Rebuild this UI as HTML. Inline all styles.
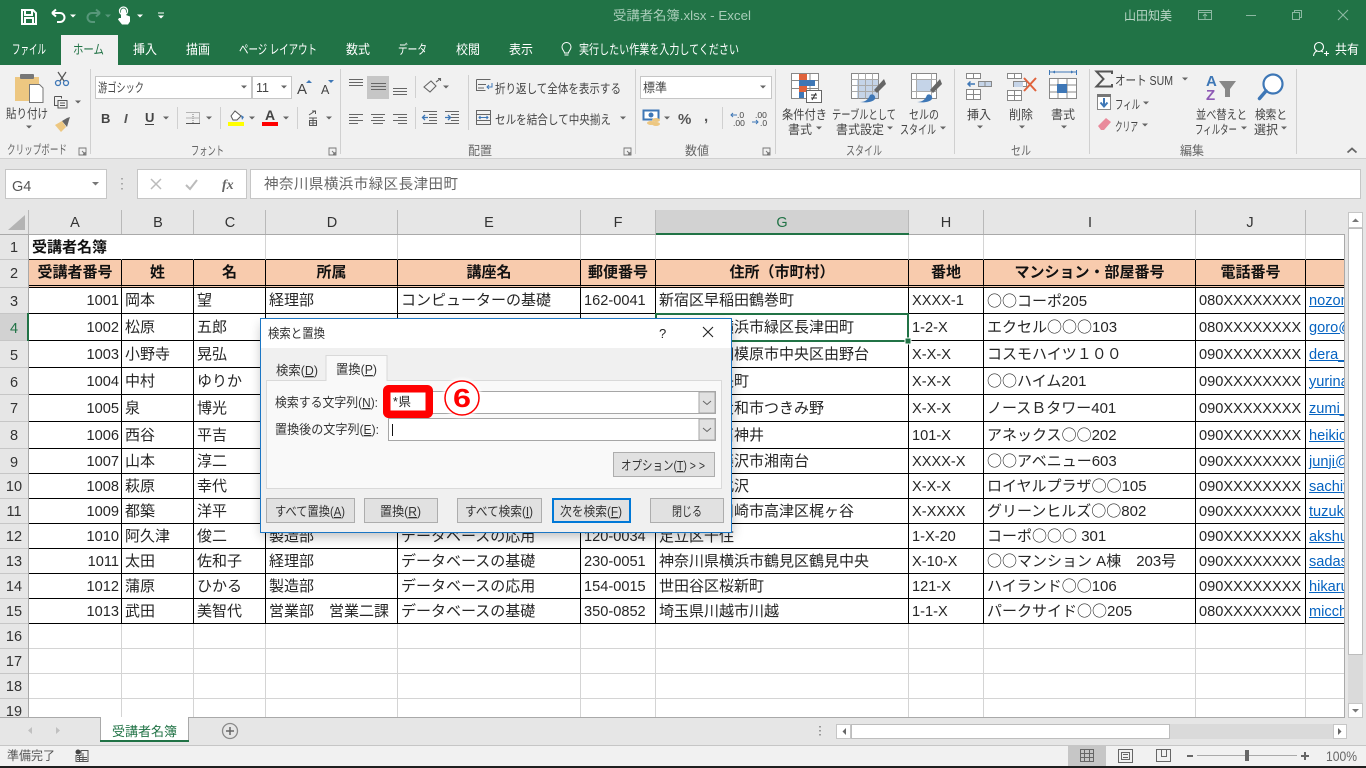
<!DOCTYPE html>
<html lang="ja"><head><meta charset="utf-8"><title>受講者名簿.xlsx - Excel</title>
<style>
html,body{margin:0;padding:0;width:1366px;height:768px;overflow:hidden;background:#fff}
table{position:absolute;left:29px;top:235px;border-collapse:separate;border-spacing:0;table-layout:fixed;width:1316px;font:14.6px "Liberation Sans","Noto Sans CJK JP",sans-serif;color:#262626}
td{box-sizing:border-box;border-right:1px solid #000;border-bottom:1px solid #000;padding:1px 0 0 3px;white-space:nowrap;overflow:hidden;line-height:16px;vertical-align:middle}
td:nth-child(2),td:nth-child(3),td:nth-child(4),td:nth-child(5),td:nth-child(7),td:nth-child(9){font-size:15px}
td.n{text-align:right;padding:1px 2px 0 0}
tr.h td{background:#f8cbad;font-weight:bold;text-align:center;border-bottom:3px double #000;padding:0;font-size:15px;color:#111}
tr.e td,tr.g td{border-color:#d4d4d4}
tr.g td{border-bottom-color:#000}
tr.l td:last-child a{color:#0563c1;text-decoration:underline}
td:last-child{border-right:0}
.c{font-family:"Noto Sans CJK JP",sans-serif}
svg{position:absolute;left:0;top:0}
svg text{font-family:"Liberation Sans","Noto Sans CJK JP",sans-serif;font-size:12.5px;fill:#444}
.w text{fill:#fff;font-size:13px}
.d text{font-size:13px;fill:#333}
.u{text-decoration:underline}
</style></head><body>
<table>
<colgroup><col style="width:93px"><col style="width:72px"><col style="width:72px"><col style="width:132px"><col style="width:183px"><col style="width:75px"><col style="width:253px"><col style="width:75px"><col style="width:212px"><col style="width:110px"><col style="width:39px"></colgroup>
<tr class="g" style="height:25px"><td style="font-weight:bold;font-size:15px;color:#111;padding-left:3px;overflow:visible;border-right-color:transparent">受講者名簿</td><td style="border-right-color:transparent"></td><td></td><td></td><td></td><td></td><td></td><td></td><td></td><td></td><td></td></tr>
<tr class="h" style="height:28px"><td>受講者番号</td><td>姓</td><td>名</td><td>所属</td><td>講座名</td><td>郵便番号</td><td>住所（市町村）</td><td>番地</td><td>マンション・部屋番号</td><td>電話番号</td><td></td></tr>
<tr class="l" style="height:26px"><td class="n">1001</td><td>岡本</td><td>望</td><td>経理部</td><td>コンピューターの基礎</td><td>162-0041</td><td>新宿区早稲田鶴巻町</td><td>XXXX-1</td><td><span class="c">○○</span>コーポ205</td><td>080XXXXXXXX</td><td><a>nozomi@</a></td></tr>
<tr class="l" style="height:27px"><td class="n">1002</td><td>松原</td><td>五郎</td><td>製造部</td><td>データベースの基礎</td><td>226-0027</td><td>神奈川県横浜市緑区長津田町</td><td>1-2-X</td><td>エクセル<span class="c">○○○</span>103</td><td>080XXXXXXXX</td><td><a>goro@x</a></td></tr>
<tr class="l" style="height:27px"><td class="n">1003</td><td>小野寺</td><td>晃弘</td><td>営業部</td><td>データベースの応用</td><td>252-0239</td><td>神奈川県相模原市中央区由野台</td><td>X-X-X</td><td>コスモハイツ１００</td><td>090XXXXXXXX</td><td><a>dera_xx</a></td></tr>
<tr class="l" style="height:27px"><td class="n">1004</td><td>中村</td><td>ゆりか</td><td>経理部</td><td>データベースの基礎</td><td>100-0000</td><td>東京都中央町</td><td>X-X-X</td><td><span class="c">○○</span>ハイム201</td><td>090XXXXXXXX</td><td><a>yurina@</a></td></tr>
<tr class="l" style="height:27px"><td class="n">1005</td><td>泉</td><td>博光</td><td>製造部</td><td>データベースの応用</td><td>242-0000</td><td>神奈川県大和市つきみ野</td><td>X-X-X</td><td>ノースＢタワー401</td><td>090XXXXXXXX</td><td><a>zumi_xx</a></td></tr>
<tr class="l" style="height:27px"><td class="n">1006</td><td>西谷</td><td>平吉</td><td>営業部</td><td>データベースの基礎</td><td>177-0000</td><td>東京都下石神井</td><td>101-X</td><td>アネックス<span class="c">○○</span>202</td><td>090XXXXXXXX</td><td><a>heikichi</a></td></tr>
<tr class="l" style="height:25px"><td class="n">1007</td><td>山本</td><td>淳二</td><td>経理部</td><td>データベースの応用</td><td>251-0000</td><td>神奈川県藤沢市湘南台</td><td>XXXX-X</td><td><span class="c">○○</span>アベニュー603</td><td>090XXXXXXXX</td><td><a>junji@x</a></td></tr>
<tr class="l" style="height:25px"><td class="n">1008</td><td>萩原</td><td>幸代</td><td>製造部</td><td>データベースの基礎</td><td>155-0000</td><td>東京都下北沢</td><td>X-X-X</td><td>ロイヤルプラザ<span class="c">○○</span>105</td><td>090XXXXXXXX</td><td><a>sachiyo</a></td></tr>
<tr class="l" style="height:25px"><td class="n">1009</td><td>都築</td><td>洋平</td><td>営業部</td><td>データベースの応用</td><td>213-0000</td><td>神奈川県川崎市高津区梶ヶ谷</td><td>X-XXXX</td><td>グリーンヒルズ<span class="c">○○</span>802</td><td>090XXXXXXXX</td><td><a>tuzuki@</a></td></tr>
<tr class="l" style="height:25px"><td class="n">1010</td><td>阿久津</td><td>俊二</td><td>製造部</td><td>データベースの応用</td><td>120-0034</td><td>足立区千住</td><td>1-X-20</td><td>コーポ<span class="c">○○○</span> 301</td><td>090XXXXXXXX</td><td><a>akshun</a></td></tr>
<tr class="l" style="height:25px"><td class="n">1011</td><td>太田</td><td>佐和子</td><td>経理部</td><td>データベースの基礎</td><td>230-0051</td><td>神奈川県横浜市鶴見区鶴見中央</td><td>X-10-X</td><td><span class="c">○○</span>マンション A棟　203号</td><td>090XXXXXXXX</td><td><a>sadasa</a></td></tr>
<tr class="l" style="height:25px"><td class="n">1012</td><td>蒲原</td><td>ひかる</td><td>製造部</td><td>データベースの応用</td><td>154-0015</td><td>世田谷区桜新町</td><td>121-X</td><td>ハイランド<span class="c">○○</span>106</td><td>090XXXXXXXX</td><td><a>hikaru</a></td></tr>
<tr class="l" style="height:25px"><td class="n">1013</td><td>武田</td><td>美智代</td><td>営業部　営業二課</td><td>データベースの基礎</td><td>350-0852</td><td>埼玉県川越市川越</td><td>1-1-X</td><td>パークサイド<span class="c">○○</span>205</td><td>080XXXXXXXX</td><td><a>micchi</a></td></tr>
<tr class="e" style="height:25px"><td></td><td></td><td></td><td></td><td></td><td></td><td></td><td></td><td></td><td></td><td></td></tr>
<tr class="e" style="height:25px"><td></td><td></td><td></td><td></td><td></td><td></td><td></td><td></td><td></td><td></td><td></td></tr>
<tr class="e" style="height:25px"><td></td><td></td><td></td><td></td><td></td><td></td><td></td><td></td><td></td><td></td><td></td></tr>
<tr class="e" style="height:19px"><td></td><td></td><td></td><td></td><td></td><td></td><td></td><td></td><td></td><td></td><td></td></tr>
</table>

<svg width="1366" height="768" viewBox="0 0 1366 768" shape-rendering="geometricPrecision">
<defs>
<path id="a" d="M-3-1.5h6l-3 3z" fill="#666"/>
<path id="la" d="M0 0h7v7h-7zM3 3l3 3M4 6h2V4" fill="none" stroke="#777" stroke-width=".9"/>
<filter id="sh" x="-10%" y="-10%" width="120%" height="125%"><feGaussianBlur stdDeviation="6"/></filter>
<filter id="gl" x="-30%" y="-30%" width="160%" height="160%"><feGaussianBlur stdDeviation="1.200"/></filter>
</defs>

<!-- title bar & tabs -->
<rect width="1366" height="65" fill="#217346"/>
<rect x="61" y="35" width="57" height="30" fill="#f1f1f1"/>
<path d="M22 10h11l3 3v11H22zM25 10v5h7v-5M25 24v-6h8v6" fill="none" stroke="#fff" stroke-width="2"/>
<path d="M52 13l4-3.500M52 13l4 3.500M52 13h8a4.500 4.500 0 0 1 0 9h-3" fill="none" stroke="#fff" stroke-width="2"/>
<path d="M70 14.500h6l-3 3z" fill="#fff"/>
<path d="M100 13l-4-3.500M100 13l-4 3.500M100 13h-8a4.500 4.500 0 0 0 0 9h3" fill="none" stroke="#57977a" stroke-width="2"/>
<path d="M105 14.500h6l-3 3z" fill="#57977a"/>
<path d="M121 18v-7a2.500 2.500 0 0 1 5 0v4l4 1.500v5l-2 3h-6l-4-5 1-1.500z" fill="#fff"/><circle cx="123.500" cy="11" r="4" fill="none" stroke="#fff" stroke-width="1.300"/>
<path d="M137 14.500h6l-3 3z" fill="#fff"/>
<path d="M158 12.500h6v1h-6zM158 15.500h6l-3 3z" fill="#fff"/>
<text x="613" y="20" textLength="138" lengthAdjust="spacingAndGlyphs" style="fill:#a9cdb9;font-size:13px">受講者名簿.xlsx  -  Excel</text>
<text x="1124" y="20" textLength="48" lengthAdjust="spacingAndGlyphs" style="fill:#b9d6c6;font-size:12.500px">山田知美</text>
<path d="M1198.500 10.500h13v9h-13zM1198.500 12.500h13M1205 19v-5M1203 16l2-2 2 2" fill="none" stroke="#8cb8a2"/>
<path d="M1246 15.500h10" stroke="#8cb8a2" fill="none"/>
<path d="M1292.500 12.500h7v7h-7zM1294.500 12.500v-2h7v7h-2" fill="none" stroke="#8cb8a2"/>
<path d="M1338 10l10 10M1348 10l-10 10" stroke="#8cb8a2" fill="none" stroke-width="1.100"/>

<g class="w">
<text x="12" y="54" textLength="34" lengthAdjust="spacingAndGlyphs">ファイル</text>
<text x="73" y="54" textLength="31" lengthAdjust="spacingAndGlyphs" style="fill:#217346">ホーム</text>
<text x="133" y="54" textLength="24" lengthAdjust="spacingAndGlyphs">挿入</text>
<text x="186" y="54" textLength="24" lengthAdjust="spacingAndGlyphs">描画</text>
<text x="239" y="54" textLength="78" lengthAdjust="spacingAndGlyphs">ページ レイアウト</text>
<text x="346" y="54" textLength="24" lengthAdjust="spacingAndGlyphs">数式</text>
<text x="398" y="54" textLength="29" lengthAdjust="spacingAndGlyphs">データ</text>
<text x="456" y="54" textLength="24" lengthAdjust="spacingAndGlyphs">校閲</text>
<text x="509" y="54" textLength="24" lengthAdjust="spacingAndGlyphs">表示</text>
<text x="579" y="54" textLength="160" lengthAdjust="spacingAndGlyphs">実行したい作業を入力してください</text>
<text x="1335" y="54" textLength="24" lengthAdjust="spacingAndGlyphs">共有</text>
</g>
<path d="M564.500 53c0-2-2.500-3-2.500-6a4.500 4.500 0 0 1 9 0c0 3-2.500 4-2.500 6zM564.500 55h4" fill="none" stroke="#fff"/>
<circle cx="1319" cy="47" r="4.500" fill="none" stroke="#fff" stroke-width="1.100"/>
<path d="M1313.500 56c.5-3 2-4.500 3.500-5M1321 51l2 1M1324 53.500h5M1326.500 51v5" fill="none" stroke="#fff" stroke-width="1.100"/>

<!-- ribbon -->
<rect y="65" width="1366" height="93" fill="#f1f1f1"/>
<rect y="158" width="1366" height="52" fill="#e6e6e6"/>
<rect y="158" width="1366" height="1" fill="#d0d0d0"/>
<g stroke="#d0d0d0">
<path d="M90.500 69v85M340.500 69v85M635.500 69v85M775.500 69v85M954.500 69v85M1089.500 69v85M1296.500 69v85"/>
<path d="M177.500 107v22M220.500 107v22M297.500 107v22M415.500 76v22M415.500 107v22M468.500 75v55M722.500 107v22"/>
</g>

<!-- clipboard -->
<path d="M15 77h9v-2h5v2h10v24H15z" fill="#edc781"/><rect x="20" y="74" width="14" height="5" rx="1" fill="#777"/>
<path d="M29.500 84.500h10l3.500 3.500v14.500h-13.500z" fill="#fff" stroke="#777"/>
<g fill="none" stroke="#555" stroke-width="1.200"><path d="M58 72l6 9M66 72l-6 9"/></g>
<circle cx="58" cy="83" r="2.500" fill="none" stroke="#3e77b6" stroke-width="1.300"/><circle cx="66" cy="83" r="2.500" fill="none" stroke="#3e77b6" stroke-width="1.300"/>
<path d="M54.500 96.500h7v2M58 100.500h9v7.500h-9zM54.500 96.500v9h3.500M60 103h5M60 105.500h5" fill="none" stroke="#555"/>
<use href="#a" x="78" y="102"/>
<path d="M55 125l7-4 4 6-5 5z" fill="#edc781"/><path d="M62 121l5-3 3-1-1 3-2 7z" fill="#666"/>
<text x="6" y="118" textLength="42" lengthAdjust="spacingAndGlyphs">貼り付け</text><use href="#a" x="29" y="127"/>
<text x="7" y="154" textLength="60" lengthAdjust="spacingAndGlyphs" style="fill:#666">クリップボード</text>
<use href="#la" x="79" y="148"/>

<!-- font -->
<rect x="95.500" y="76.500" width="156" height="22" fill="#fff" stroke="#c6c6c6"/>
<rect x="252.500" y="76.500" width="39" height="22" fill="#fff" stroke="#c6c6c6"/>
<text x="98" y="92" textLength="46" lengthAdjust="spacingAndGlyphs">游ゴシック</text><use href="#a" x="244" y="87"/>
<text x="256" y="92" style="font-size:12.500px">11</text><use href="#a" x="284" y="87"/>
<text x="297" y="94" style="font-size:15px">A</text><path d="M306 83l3-3 3 3z" fill="#3e77b6"/>
<text x="321" y="94" style="font-size:12.500px">A</text><path d="M328 80h6l-3 3z" fill="#3e77b6"/>
<text x="101" y="123" style="font-size:13px;font-weight:bold">B</text>
<text x="124" y="123" style="font-size:13px;font-style:italic;font-weight:bold;fill:#555">I</text>
<text x="145" y="122" style="font-size:13px;font-weight:bold">U</text><path d="M145 124.500h9" stroke="#444"/>
<use href="#a" x="166" y="118"/>
<path d="M186.500 112.500h13v11h-13M193 112v11M186.500 118h13" fill="none" stroke="#777" stroke-dasharray="1 1"/><path d="M186 123.500h14" stroke="#555"/>
<use href="#a" x="209" y="118"/>
<path d="M231 116l4-5 6 5-4 4h-4z" fill="#fff" stroke="#555"/><path d="M241 115l3 2-2 3z" fill="#3e77b6"/>
<rect x="228" y="122" width="16" height="4" fill="#ff0"/><use href="#a" x="252" y="118"/>
<text x="265" y="120" style="font-size:14px;font-weight:bold">A</text><rect x="262" y="122" width="16" height="4" fill="#f00"/><use href="#a" x="286" y="118"/>
<path d="M309 115l6-4M312 111h3.500v3M309 118h8M313 118v8M309.500 120.500h7v5h-7zM309.500 123h7" fill="none" stroke="#555"/>
<use href="#a" x="329" y="118"/>
<text x="191" y="155" textLength="33" lengthAdjust="spacingAndGlyphs" style="fill:#666">フォント</text>
<use href="#la" x="329" y="148"/>

<!-- alignment -->
<rect x="367" y="76" width="22" height="23" fill="#c6c6c6"/>
<g stroke="#666" fill="none">
<path d="M349 79.500h14M349 82.500h14M349 85.500h14"/>
<path d="M371 83.500h15M371 86.500h15M371 89.500h15"/>
<path d="M393 88.500h14M393 91.500h14M393 94.500h14"/>
<path d="M349 114.500h14M349 117.500h9M349 120.500h14M349 123.500h9"/>
<path d="M371 114.500h14M373 117.500h10M371 120.500h14M373 123.500h10"/>
<path d="M393 114.500h14M398 117.500h9M393 120.500h14M398 123.500h9"/>
<path d="M429 114.500h8M429 117.500h8M429 120.500h8M423 123.500h14M423 111.500h14"/>
<path d="M451 114.500h8M451 117.500h8M451 120.500h8M445 123.500h14M445 111.500h14"/>
</g>
<path d="M423 117.500h5M425 115l-2.500 2.500 2.500 2.500" stroke="#3e77b6" fill="none" stroke-width="1.300"/>
<path d="M445 117.500h5M448 115l2.500 2.500-2.500 2.500" stroke="#3e77b6" fill="none" stroke-width="1.300"/>
<path d="M424 87l7-6 5 5-6 6zM436 82l4-3M438 78.500h2.500v2.500" fill="none" stroke="#666" stroke-width="1.100"/>
<use href="#a" x="446" y="87"/>
<path d="M476.500 79.500h14M476.500 79.500v11h9M478 84.500h8M478 88h6" fill="none" stroke="#666"/><path d="M492 83v4h-5M489 85l-2 2 2 2" fill="none" stroke="#3e77b6"/>
<text x="495" y="93" textLength="126" lengthAdjust="spacingAndGlyphs">折り返して全体を表示する</text>
<path d="M476.500 110.500h14v14h-14zM476.500 114.500h14M476.500 120.500h14" fill="none" stroke="#666"/><path d="M479 117.500h9M480.500 116l-1.500 1.500 1.500 1.500M486.500 116l1.500 1.500-1.500 1.500" fill="none" stroke="#3e77b6"/>
<text x="495" y="124" textLength="116" lengthAdjust="spacingAndGlyphs">セルを結合して中央揃え</text><use href="#a" x="623" y="118"/>
<text x="468" y="155" textLength="24" lengthAdjust="spacingAndGlyphs" style="fill:#666">配置</text>
<use href="#la" x="624" y="148"/>

<!-- number -->
<rect x="640.500" y="76.500" width="131" height="22" fill="#fff" stroke="#c6c6c6"/>
<text x="643" y="92" textLength="24" lengthAdjust="spacingAndGlyphs">標準</text><use href="#a" x="763" y="87"/>
<rect x="643.500" y="110.500" width="15" height="9" fill="#fff" stroke="#3e77b6" stroke-width="2"/><circle cx="651" cy="115" r="2.500" fill="#3e77b6"/>
<ellipse cx="651" cy="123" rx="4" ry="2" fill="#edc781"/><ellipse cx="656" cy="120" rx="4" ry="2" fill="#edc781"/><ellipse cx="656" cy="124" rx="4" ry="2" fill="#edc781"/>
<use href="#a" x="667" y="118"/>
<text x="678" y="124" style="font-size:15px;font-weight:bold;fill:#555">%</text>
<text x="704" y="121" style="font-size:15px;font-weight:bold;fill:#555">,</text>
<text x="737" y="118" style="font-size:8.500px">.0</text><text x="733" y="126" style="font-size:8.500px">.00</text><path d="M731 115h6M733 113l-2 2 2 2" stroke="#3e77b6" fill="none"/>
<text x="755" y="118" style="font-size:8.500px">.00</text><text x="760" y="126" style="font-size:8.500px">.0</text><path d="M752 122h6M756 120l2 2-2 2" stroke="#3e77b6" fill="none"/>
<text x="685" y="155" textLength="24" lengthAdjust="spacingAndGlyphs" style="fill:#666">数値</text>
<use href="#la" x="763" y="148"/>

<!-- styles -->
<path d="M791.500 73.500h27v25h-27zM791.500 80.500h27M791.500 88.500h27M801 73.500v25M810 73.500v25" fill="#fff" stroke="#888"/>
<rect x="799" y="74" width="8" height="6" fill="#e0633c"/><rect x="799" y="80" width="16" height="6" fill="#3e77b6"/><rect x="799" y="86" width="8" height="6" fill="#e0633c"/><rect x="799" y="92" width="5" height="6" fill="#3e77b6"/>
<rect x="806.500" y="90.500" width="15" height="12" fill="#fff" stroke="#666"/>
<path d="M811 95h6M811 98h6M816 93l-4 7" stroke="#333" fill="none"/>
<text x="782" y="119" textLength="45" lengthAdjust="spacingAndGlyphs">条件付き</text>
<text x="788" y="134" textLength="24" lengthAdjust="spacingAndGlyphs">書式</text><use href="#a" x="819" y="128"/>
<path d="M851.500 73.500h27v25h-27z" fill="#fff" stroke="#888"/><rect x="857" y="79" width="21" height="19" fill="#c5d4e8"/>
<path d="M851.500 79.500h27M851.500 85.500h27M851.500 91.500h27M858.500 73.500v25M865.500 73.500v25M872.500 73.500v25" fill="none" stroke="#aaa"/>
<path d="M884 79l-10 11 3 3 9-9z" fill="#666"/><path d="M860 102c5 0 8-2 10-7 3-2 6 1 5 4-2 3-8 4-15 3z" fill="#3e77b6"/>
<text x="832" y="119" textLength="64" lengthAdjust="spacingAndGlyphs">テーブルとして</text>
<text x="836" y="134" textLength="48" lengthAdjust="spacingAndGlyphs">書式設定</text><use href="#a" x="890" y="128"/>
<path d="M911.500 73.500h25v25h-25z" fill="#fff" stroke="#888"/><rect x="916" y="79" width="15" height="12" fill="#c5d4e8"/>
<path d="M911.500 79.500h25M911.500 91.500h25M916.500 73.500v25M931.500 73.500v25" fill="none" stroke="#aaa"/>
<path d="M940 79l-10 11 3 3 9-9z" fill="#666"/><path d="M917 102c5 0 8-2 10-7 3-2 6 1 5 4-2 3-8 4-15 3z" fill="#3e77b6"/>
<text x="909" y="119" textLength="30" lengthAdjust="spacingAndGlyphs">セルの</text>
<text x="900" y="134" textLength="36" lengthAdjust="spacingAndGlyphs">スタイル</text><use href="#a" x="943" y="128"/>
<text x="846" y="155" textLength="36" lengthAdjust="spacingAndGlyphs" style="fill:#666">スタイル</text>

<!-- cells -->
<path d="M966.500 73.500h14v5h-14zM973.500 73.500v5M966.500 89.500h14v10h-14zM966.500 94.500h14M973.500 89.500v10" fill="#fff" stroke="#888"/>
<path d="M978.500 81.500h13v5h-13zM985 81.500v5" fill="#c5d4e8" stroke="#888"/><path d="M968 84h7M970.500 81.500l-2.500 2.500 2.500 2.500" stroke="#3e77b6" stroke-width="1.500" fill="none"/>
<text x="967" y="119" textLength="24" lengthAdjust="spacingAndGlyphs">挿入</text><use href="#a" x="980" y="127"/>
<path d="M1007.500 73.500h14v5h-14zM1014.500 73.500v5M1007.500 90.500h14v10h-14zM1007.500 95.500h14M1014.500 90.500v10M1013.500 81.500h13v5h-13z" fill="#fff" stroke="#888"/>
<rect x="1014" y="82" width="9" height="5" fill="#c5d4e8"/>
<path d="M1024 78l12 13M1036 78l-12 13" stroke="#e0633c" stroke-width="2" fill="none"/>
<text x="1009" y="119" textLength="24" lengthAdjust="spacingAndGlyphs">削除</text><use href="#a" x="1022" y="127"/>
<path d="M1049.500 72h27M1049.500 70v5M1076.500 70v5" stroke="#3e77b6" fill="none"/><path d="M1052 72l3-1.500v3zM1074 72l-3-1.500v3z" fill="#3e77b6"/>
<path d="M1049.500 78.500h27v20h-27zM1049.500 85h27M1049.500 92h27M1058 78.500v20M1067 78.500v20" fill="#fff" stroke="#888"/>
<rect x="1057" y="84" width="10" height="9" fill="#3e77b6"/>
<text x="1051" y="119" textLength="24" lengthAdjust="spacingAndGlyphs">書式</text><use href="#a" x="1064" y="127"/>
<text x="1011" y="155" textLength="20" lengthAdjust="spacingAndGlyphs" style="fill:#666">セル</text>

<!-- editing -->
<path d="M1112 74v-2.500h-15.500l7 7.500-7 7.500h15.500V84" fill="none" stroke="#555" stroke-width="2"/>
<text x="1115" y="85" textLength="58" lengthAdjust="spacingAndGlyphs" style="font-size:13px">オート SUM</text><use href="#a" x="1185" y="79"/>
<path d="M1097.500 94.500h13v15h-13z" fill="#fff" stroke="#888"/><rect x="1097" y="94" width="14" height="3" fill="#777"/><path d="M1104 98v8M1100.500 102.500l3.500 4 3.500-4" stroke="#3e77b6" stroke-width="2" fill="none"/>
<text x="1115" y="109" textLength="25" lengthAdjust="spacingAndGlyphs">フィル</text><use href="#a" x="1146" y="103"/>
<path d="M1098 126l8-8 5 4-7 8h-3z" fill="#e98a9b"/>
<text x="1115" y="131" textLength="23" lengthAdjust="spacingAndGlyphs">クリア</text><use href="#a" x="1145" y="125"/>
<text x="1206" y="86" style="font-size:15px;font-weight:bold;fill:#3e77b6">A</text><text x="1206" y="100" style="font-size:15px;font-weight:bold;fill:#8e5ab5">Z</text>
<path d="M1219 81h17l-6 8v8h-5v-8z" fill="#888"/>
<text x="1196" y="119" textLength="51" lengthAdjust="spacingAndGlyphs">並べ替えと</text>
<text x="1195" y="134" textLength="42" lengthAdjust="spacingAndGlyphs">フィルター</text><use href="#a" x="1244" y="128"/>
<circle cx="1273" cy="84" r="9.500" fill="#fff" stroke="#3e77b6" stroke-width="2.200"/><path d="M1266 91l-6.500 7.500" stroke="#3e77b6" stroke-width="3.500" stroke-linecap="round"/>
<text x="1255" y="119" textLength="32" lengthAdjust="spacingAndGlyphs">検索と</text>
<text x="1254" y="134" textLength="24" lengthAdjust="spacingAndGlyphs">選択</text><use href="#a" x="1284" y="128"/>
<text x="1180" y="155" textLength="24" lengthAdjust="spacingAndGlyphs" style="fill:#666">編集</text>
<path d="M1347.500 152.500l4.500-4 4.500 4" fill="none" stroke="#666" stroke-width="1.800"/>

<!-- formula bar -->
<rect x="5.500" y="169.500" width="101" height="29" fill="#fff" stroke="#c6c6c6"/>
<text x="12" y="191" style="font-size:14.500px;fill:#555">G4</text>
<path d="M92 182h7l-3.500 3.500z" fill="#777"/>
<path d="M122 178v1.500M122 183v1.500M122 188v1.500" stroke="#aaa" stroke-width="2" fill="none"/>
<rect x="137.500" y="169.500" width="109" height="29" fill="#fff" stroke="#c6c6c6"/>
<path d="M151 179l10 10M161 179l-10 10" stroke="#bbb" stroke-width="1.500" fill="none"/>
<path d="M186 185l4 4 7-9" stroke="#bbb" stroke-width="2" fill="none"/>
<text x="222" y="189" style="font-family:'Liberation Serif',serif;font-size:14px;font-style:italic;font-weight:bold;fill:#666">fx</text>
<rect x="250.500" y="169.500" width="1110" height="29" fill="#fff" stroke="#c6c6c6"/>
<text x="264" y="189" textLength="194" style="font-size:14.500px;fill:#666">神奈川県横浜市緑区長津田町</text>

<!-- col headers -->
<rect x="0" y="210" width="1345" height="24" fill="#e6e6e6"/>
<rect x="656" y="210" width="252" height="24" fill="#d2d2d2"/>
<path d="M25 215v15H8z" fill="#b4b4b4"/>
<g stroke="#b9b9b9"><path d="M28.500 210v24M121.500 210v24M193.500 210v24M265.500 210v24M397.500 210v24M580.500 210v24M655.500 210v24M908.500 210v24M983.500 210v24M1195.500 210v24M1305.500 210v24"/></g>
<rect y="234" width="1345" height="1" fill="#a9a9a9"/>
<rect x="656" y="233" width="253" height="2" fill="#217346"/>
<g text-anchor="middle">
<text x="75" y="227" style="font-size:14.500px;fill:#333">A</text><text x="158" y="227" style="font-size:14.500px;fill:#333">B</text><text x="230" y="227" style="font-size:14.500px;fill:#333">C</text><text x="332" y="227" style="font-size:14.500px;fill:#333">D</text><text x="489" y="227" style="font-size:14.500px;fill:#333">E</text><text x="618" y="227" style="font-size:14.500px;fill:#333">F</text><text x="782" y="227" style="font-size:14.500px;fill:#217346">G</text><text x="946" y="227" style="font-size:14.500px;fill:#333">H</text><text x="1090" y="227" style="font-size:14.500px;fill:#333">I</text><text x="1250" y="227" style="font-size:14.500px;fill:#333">J</text>
</g>
<!-- row headers -->
<rect y="235" width="28" height="483" fill="#e6e6e6"/>
<rect y="313" width="28" height="28" fill="#d2d2d2"/>
<g stroke="#c6c6c6"><path d="M0 259.500h28M0 287.500h28M0 313.500h28M0 340.500h28M0 367.500h28M0 394.500h28M0 421.500h28M0 448.500h28M0 473.500h28M0 498.500h28M0 523.500h28M0 548.500h28M0 573.500h28M0 598.500h28M0 623.500h28M0 648.500h28M0 673.500h28M0 698.500h28"/></g>
<rect x="28" y="234" width="1" height="484" fill="#a9a9a9"/>
<rect x="27" y="313" width="2" height="28" fill="#217346"/>
<g text-anchor="middle">
<text x="14" y="252" style="font-size:14.500px;fill:#333">1</text><text x="14" y="278" style="font-size:14.500px;fill:#333">2</text><text x="14" y="306" style="font-size:14.500px;fill:#333">3</text><text x="14" y="333" style="font-size:14.500px;fill:#217346">4</text><text x="14" y="360" style="font-size:14.500px;fill:#333">5</text><text x="14" y="387" style="font-size:14.500px;fill:#333">6</text><text x="14" y="413" style="font-size:14.500px;fill:#333">7</text><text x="14" y="440" style="font-size:14.500px;fill:#333">8</text><text x="14" y="467" style="font-size:14.500px;fill:#333">9</text><text x="14" y="491" style="font-size:14.500px;fill:#333">10</text><text x="14" y="516" style="font-size:14.500px;fill:#333">11</text><text x="14" y="541" style="font-size:14.500px;fill:#333">12</text><text x="14" y="566" style="font-size:14.500px;fill:#333">13</text><text x="14" y="591" style="font-size:14.500px;fill:#333">14</text><text x="14" y="616" style="font-size:14.500px;fill:#333">15</text><text x="14" y="641" style="font-size:14.500px;fill:#333">16</text><text x="14" y="666" style="font-size:14.500px;fill:#333">17</text><text x="14" y="691" style="font-size:14.500px;fill:#333">18</text><text x="14" y="716" style="font-size:14.500px;fill:#333">19</text>
</g>

<!-- selection -->
<rect x="656" y="314" width="252" height="27" fill="none" stroke="#217346" stroke-width="2"/>
<rect x="905" y="338" width="6" height="6" fill="#217346" stroke="#fff" stroke-width="1"/>

<!-- right scrollbar -->
<rect x="1345" y="210" width="21" height="508" fill="#e6e6e6"/>
<rect x="1344" y="234" width="1" height="484" fill="#a9a9a9"/>
<rect x="1348.500" y="212.500" width="14" height="15" fill="#fff" stroke="#c6c6c6"/>
<path d="M1352 222h7l-3.500-3.500z" fill="#777"/>
<rect x="1348.500" y="228.500" width="14" height="426" fill="#fff" stroke="#bdbdbd"/>
<rect x="1348" y="655" width="15" height="48" fill="#dadada"/>
<rect x="1348.500" y="703.500" width="14" height="14" fill="#fff" stroke="#c6c6c6"/>
<path d="M1352 709h7l-3.500 3.500z" fill="#777"/>

<!-- sheet tabs -->
<rect y="718" width="1366" height="28" fill="#e6e6e6"/>
<rect y="717" width="1345" height="1" fill="#a9a9a9"/>
<path d="M32 727l-4 3.500 4 3.500zM56 727l4 3.500-4 3.500z" fill="#c0c0c0"/>
<rect x="100.500" y="717.500" width="88" height="24" fill="#fff" stroke="#a9a9a9"/>
<rect x="101" y="717" width="87" height="3" fill="#fff"/>
<rect x="100" y="740" width="89" height="2" fill="#217346"/>
<text x="112" y="736" textLength="65" lengthAdjust="spacingAndGlyphs" style="font-size:13px;fill:#217346">受講者名簿</text>
<circle cx="230" cy="731" r="7.500" fill="none" stroke="#8a8a8a" stroke-width="1.300"/><path d="M230 727v8M226 731h8" stroke="#666" stroke-width="1.500"/>
<path d="M820 726v1.500M820 730v1.500M820 734v1.500" stroke="#999" stroke-width="2" fill="none"/>
<rect x="836.500" y="724.500" width="14" height="14" fill="#fff" stroke="#c6c6c6"/>
<path d="M846 728v7l-3.500-3.500z" fill="#666"/>
<rect x="851.500" y="724.500" width="318" height="14" fill="#fff" stroke="#bdbdbd"/>
<rect x="1170" y="724" width="163" height="15" fill="#dadada"/>
<rect x="1333.500" y="724.500" width="13" height="14" fill="#fff" stroke="#c6c6c6"/>
<path d="M1338 728v7l3.500-3.500z" fill="#666"/>

<!-- status -->
<rect y="745" width="1366" height="21" fill="#f1f1f1"/>
<rect y="745" width="1366" height="1" fill="#c6c6c6"/>
<rect y="766" width="1366" height="2" fill="#1f1f1f"/>
<text x="7" y="760" textLength="48" lengthAdjust="spacingAndGlyphs" style="fill:#555">準備完了</text>
<circle cx="78" cy="752" r="2.500" fill="#444"/><path d="M81 750.500h7v11h-12v-6h5zM77 757.500h10M77 759.500h10M79.500 756v5M83 753v8" fill="none" stroke="#555"/>
<rect x="1068" y="746" width="38" height="20" fill="#c6c6c6"/>
<path d="M1080.500 749.500h13v12h-13zM1080.500 753.500h13M1080.500 757.500h13M1084.500 749.500v12M1089.500 749.500v12" fill="none" stroke="#666"/>
<path d="M1118.500 749.500h14v13h-14zM1121.500 752.500h8v7h-8zM1123 754.500h5M1123 757.500h5" fill="none" stroke="#666"/>
<path d="M1156.500 749.500h14v12h-14zM1161.500 749.500v7h5v-7" fill="none" stroke="#666"/>
<rect x="1187" y="755" width="6" height="2" fill="#666"/>
<rect x="1197" y="755" width="100" height="1" fill="#aaa"/>
<rect x="1245" y="750" width="4" height="11" fill="#666"/>
<path d="M1301 756h8M1305 752v8" stroke="#666" stroke-width="2"/>
<text x="1326" y="761" textLength="31" lengthAdjust="spacingAndGlyphs" style="font-size:14px;fill:#666">100%</text>

<!-- dialog -->
<rect x="262" y="324" width="470" height="212" fill="#000" opacity=".28" filter="url(#sh)"/>
<rect x="260.500" y="318.500" width="471" height="214" fill="#f0f0f0" stroke="#1b76c4"/>
<rect x="261" y="319" width="470" height="29" fill="#fff"/>
<rect x="266.500" y="380.500" width="455" height="108" fill="#f9f9f9" stroke="#d9d9d9"/>
<path d="M326 381v-25.500h61v25.500" fill="#f9f9f9" stroke="#d9d9d9"/>
<rect x="327" y="379" width="59" height="3" fill="#f9f9f9"/>
<g class="d">
<text x="268" y="338" textLength="57" lengthAdjust="spacingAndGlyphs">検索と置換</text>
<text x="276" y="375" textLength="42" lengthAdjust="spacingAndGlyphs">検索(<tspan class="u">D</tspan>)</text>
<text x="336" y="374" textLength="41" lengthAdjust="spacingAndGlyphs">置換(<tspan class="u">P</tspan>)</text>
<text x="275" y="407" textLength="103" lengthAdjust="spacingAndGlyphs">検索する文字列(<tspan class="u">N</tspan>):</text>
<text x="275" y="434" textLength="104" lengthAdjust="spacingAndGlyphs">置換後の文字列(<tspan class="u">E</tspan>):</text>
</g>
<text x="659" y="338" style="font-size:13px;fill:#222">?</text>
<path d="M703 327l10 10M713 327l-10 10" stroke="#222" fill="none" stroke-width="1.100"/>
<rect x="388.500" y="391.500" width="327" height="22" fill="#fff" stroke="#a6a6a6"/>
<rect x="699" y="392" width="16" height="21" fill="#e1e1e1" stroke="#a6a6a6"/>
<path d="M703 401l4 3.500 4-3.500" fill="none" stroke="#666"/>
<rect x="388.500" y="418.500" width="327" height="22" fill="#fff" stroke="#a6a6a6"/>
<rect x="699" y="419" width="16" height="21" fill="#e1e1e1" stroke="#a6a6a6"/>
<path d="M703 428l4 3.500 4-3.500" fill="none" stroke="#666"/>
<rect x="392" y="424" width="1" height="12" fill="#111"/>
<rect x="386.750" y="388.750" width="42.500" height="25.500" rx="2" fill="#fff" stroke="#f00" stroke-width="7.500"/>
<text x="393" y="406" textLength="18" style="font-size:12.500px;fill:#222">*県</text>
<circle cx="462" cy="398" r="20" fill="#fff" opacity=".75" filter="url(#gl)"/>
<circle cx="462" cy="398" r="17" fill="#fff" stroke="#f00" stroke-width="1.500"/>
<text x="462" y="407" text-anchor="middle" textLength="18" lengthAdjust="spacingAndGlyphs" style="font-size:26px;font-weight:bold;fill:#f00">6</text>
<rect x="613.500" y="452.500" width="101" height="24" fill="#e1e1e1" stroke="#adadad"/>
<g fill="#e1e1e1" stroke="#adadad">
<rect x="266.500" y="498.500" width="88" height="24"/><rect x="364.500" y="498.500" width="73" height="24"/><rect x="457.500" y="498.500" width="84" height="24"/><rect x="650.500" y="498.500" width="73" height="24"/>
</g>
<rect x="553" y="499" width="77" height="23" fill="#e1e1e1" stroke="#0078d7" stroke-width="2"/>
<g class="d">
<text x="621" y="470" textLength="84" lengthAdjust="spacingAndGlyphs">オプション(<tspan class="u">T</tspan>) &gt; &gt;</text>
<text x="275" y="516" textLength="70" lengthAdjust="spacingAndGlyphs">すべて置換(<tspan class="u">A</tspan>)</text>
<text x="380" y="516" textLength="41" lengthAdjust="spacingAndGlyphs">置換(<tspan class="u">R</tspan>)</text>
<text x="465" y="516" textLength="68" lengthAdjust="spacingAndGlyphs">すべて検索(<tspan class="u">I</tspan>)</text>
<text x="560" y="516" textLength="62" lengthAdjust="spacingAndGlyphs">次を検索(<tspan class="u">F</tspan>)</text>
<text x="672" y="516" textLength="30" lengthAdjust="spacingAndGlyphs">閉じる</text>
</g>
</svg>
</body></html>
